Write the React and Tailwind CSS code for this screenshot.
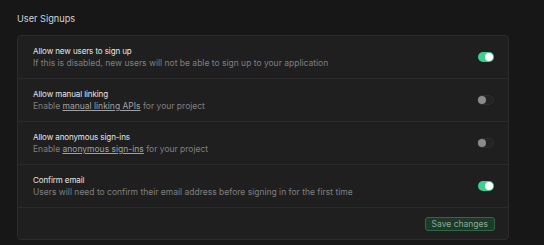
import React from "react";

function Toggle({ on }) {
  return on ? (
    <div className="w-[16px] h-[10px] rounded-full bg-[#3ecf8e] flex items-center justify-end pr-[1px]">
      <div className="w-[8px] h-[8px] rounded-full bg-white" />
    </div>
  ) : (
    <div className="w-[17px] h-[10px] rounded-full bg-[#232323] border border-[#2e2e2e] flex items-center">
      <div className="w-[8px] h-[8px] rounded-full bg-[#8b8b8b]" />
    </div>
  );
}

function Row({ title, desc, on }) {
  return (
    <div className="h-[43px] flex items-center justify-between pl-[15px] pr-[14px] border-b border-[#2a2a2a]">
      <div className="flex flex-col">
        <div className="text-[8px] tracking-[-0.1px] leading-[12px] text-[#e6e6e6]">{title}</div>
        <div className="text-[8.5px] leading-[12px] text-[#7f7f7f]">{desc}</div>
      </div>
      <Toggle on={on} />
    </div>
  );
}

export default function App() {
  return (
    <div
      className="w-[544px] h-[245px] bg-[#171717] pt-[12px] pl-[17px]"
      style={{ fontFamily: "Inter, 'Noto Sans', sans-serif" }}
    >
      <div className="text-[9.2px] leading-[14px] text-[#d4d4d4] mb-[9px]">User Signups</div>
      <div className="w-[492px] h-[205px] rounded-[4px] border border-[#2c2c2c] bg-[#1f1f1f] flex flex-col">
        <Row
          title="Allow new users to sign up"
          desc="If this is disabled, new users will not be able to sign up to your application"
          on
        />
        <Row
          title="Allow manual linking"
          desc={
            <>
              Enable <span className="underline text-[#a0a0a0]">manual linking APIs</span> for your project
            </>
          }
        />
        <Row
          title="Allow anonymous sign-ins"
          desc={
            <>
              Enable <span className="underline text-[#a0a0a0]">anonymous sign-ins</span> for your project
            </>
          }
        />
        <Row
          title="Confirm email"
          desc="Users will need to confirm their email address before signing in for the first time"
          on
        />
        <div className="flex-1 flex items-center justify-end pr-[13px]">
          <button className="h-[14px] px-[6px] rounded-[3px] bg-[#1c3a27] border border-[#2b6a43] text-[8.5px] leading-[12px] text-[#8fa898]">
            Save changes
          </button>
        </div>
      </div>
    </div>
  );
}
